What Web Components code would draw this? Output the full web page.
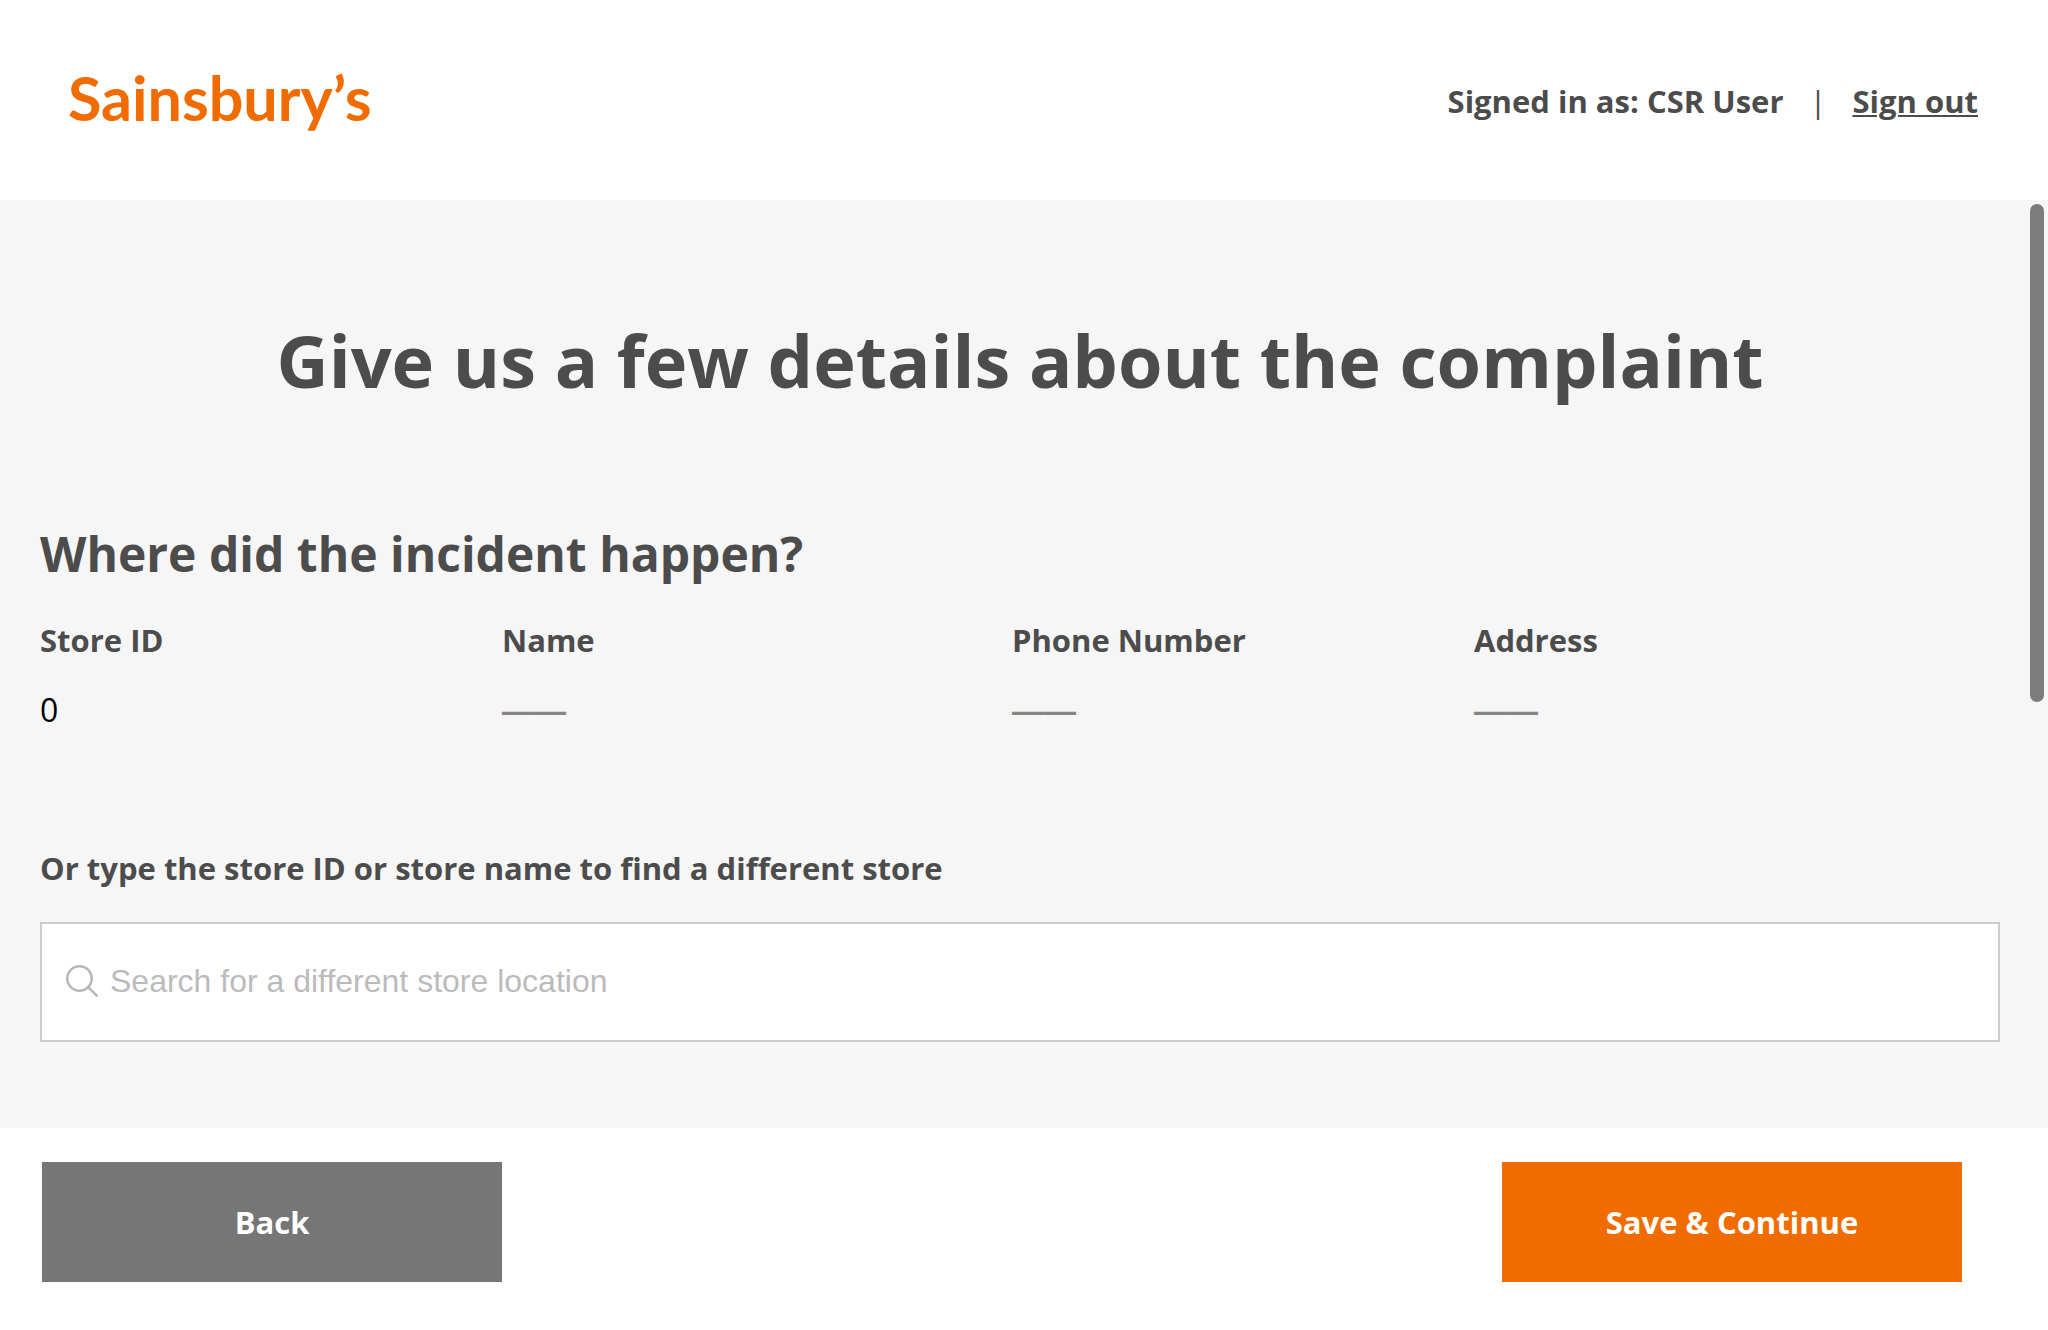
<!DOCTYPE html>
<html lang="en">
<head>
<meta charset="utf-8">
<meta name="viewport" content="width=device-width, initial-scale=1">
<title>Complaint details</title>
<style>
  html, body { height: 100%; }
  body {
    margin: 0;
    color: #4c4c4c;
    background: #fff;
    font: 700 31px/40px "Open Sans", "Noto Sans", sans-serif;
    --brand: #f06c00;
    --gutter: 40px;
  }
</style>
</head>
<body>
<complaint-page>
  <site-header slot="header" user="CSR User"></site-header>
  <store-details heading="Where did the incident happen?">
    <store-field label="Store ID">0</store-field>
    <store-field label="Name"></store-field>
    <store-field label="Phone Number"></store-field>
    <store-field label="Address"></store-field>
  </store-details>
  <store-search label="Or type the store ID or store name to find a different store" placeholder="Search for a different store location"></store-search>
  <action-bar slot="footer">
    <action-button slot="start" variant="secondary">Back</action-button>
    <action-button slot="end">Save &amp; Continue</action-button>
  </action-bar>
</complaint-page>

<script>
  class BaseElement extends HTMLElement {
    connectedCallback() {
      if (this.shadowRoot) return;
      const template = document.createElement('template');
      template.innerHTML = this.render();
      this.attachShadow({ mode: 'open' }).append(template.content.cloneNode(true));
    }
    attr(name) { return this.getAttribute(name) || ''; }
  }

  customElements.define('complaint-page', class extends BaseElement {
    render() {
      return `
        <style>
          :host { display: flex; flex-direction: column; height: 100vh; }
          .body { position: relative; flex: 1; min-height: 0; background: #f6f6f6; }
          main {
            box-sizing: border-box; height: 100%; overflow-y: auto; scrollbar-width: none;
            padding: 120px 48px 80px var(--gutter);
          }
          h1 { margin: 0 0 124px; font-size: 72px; line-height: 80px; text-align: center; }
          .thumb {
            position: absolute; top: 4px; right: 4px; width: 14px; height: 498px;
            border-radius: 7px; background: #7c7c7c;
          }
        </style>
        <slot name="header"></slot>
        <div class="body">
          <main>
            <h1>Give us a few details about the complaint</h1>
            <slot></slot>
          </main>
          <div class="thumb" aria-hidden="true"></div>
        </div>
        <slot name="footer"></slot>`;
    }
  });

  customElements.define('brand-logo', class extends BaseElement {
    render() {
      return `
        <style>
          :host { display: block; }
          a { display: block; }
          svg { display: block; fill: var(--brand); font: 700 61px/1 Lato, sans-serif; }
        </style>
        <a href="#" aria-label="Sainsbury's home">
          <svg width="320" height="80" viewBox="0 0 320 80"><text x="0" y="60">Sainsbury’s</text></svg>
        </a>`;
    }
  });

  customElements.define('site-header', class extends BaseElement {
    render() {
      return `
        <style>
          :host { display: block; }
          header {
            display: flex; align-items: center; justify-content: space-between;
            box-sizing: border-box; height: 200px; padding: 2px 70px 0 68px;
          }
          nav { display: flex; align-items: center; gap: 26px; }
          .rule { font-weight: 400; }
          a { color: inherit; text-decoration-thickness: 2px; text-underline-offset: 2px; }
        </style>
        <header>
          <brand-logo></brand-logo>
          <nav aria-label="Account">
            <span>Signed in as: ${this.attr('user')}</span>
            <span class="rule">|</span>
            <a href="#">Sign out</a>
          </nav>
        </header>`;
    }
  });

  customElements.define('store-details', class extends BaseElement {
    render() {
      return `
        <style>
          :host { display: block; }
          h2 { margin: 0 0 36px; font-size: 48px; line-height: 60px; }
          .fields { display: grid; grid-template-columns: 462fr 510fr 462fr 526fr; }
        </style>
        <section>
          <h2>${this.attr('heading')}</h2>
          <div class="fields"><slot></slot></div>
        </section>`;
    }
  });

  customElements.define('store-field', class extends BaseElement {
    render() {
      return `
        <style>
          :host { display: block; }
          dl, dd { margin: 0; }
          dd { margin-top: 30px; font-size: 32px; font-weight: 400; color: #000; }
          .empty { font-family: "Liberation Sans", sans-serif; font-weight: 700; color: #858585; }
        </style>
        <dl>
          <dt>${this.attr('label')}</dt>
          <dd><slot><span class="empty">——</span></slot></dd>
        </dl>`;
    }
  });

  customElements.define('store-search', class extends BaseElement {
    render() {
      return `
        <style>
          :host { display: block; margin-top: 117px; }
          label { display: block; margin-bottom: 34px; }
          .box {
            display: flex; align-items: center; gap: 12px; box-sizing: border-box;
            height: 120px; padding: 0 24px 2px; border: 2px solid #ccc; background: #fff;
          }
          svg { flex: none; fill: none; stroke: #b4b8b8; stroke-width: 2.5; }
          input {
            flex: 1; min-width: 0; padding: 0; border: 0; outline: 0; background: none; color: #4c4c4c;
            font: 400 32px/40px "Liberation Sans", sans-serif;
          }
          input::placeholder { color: #bbb; opacity: 1; }
        </style>
        <label for="store">${this.attr('label')}</label>
        <div class="box">
          <svg width="32" height="32" viewBox="0 0 32 32" aria-hidden="true">
            <circle cx="13.5" cy="13.5" r="12.2"/><path d="M22.2 22.2 31.5 31.5"/>
          </svg>
          <input id="store" type="text" placeholder="${this.attr('placeholder')}">
        </div>`;
    }
  });

  customElements.define('action-bar', class extends BaseElement {
    render() {
      return `
        <style>
          :host { display: block; background: #fff; }
          footer { display: flex; justify-content: space-between; padding: 34px 86px 48px 42px; }
        </style>
        <footer><slot name="start"></slot><slot name="end"></slot></footer>`;
    }
  });

  customElements.define('action-button', class extends BaseElement {
    render() {
      return `
        <style>
          :host { display: block; }
          button {
            display: block; width: 460px; height: 120px; padding: 0; border: 0; cursor: pointer;
            color: #fff; background: var(--brand); font: inherit;
          }
          :host([variant="secondary"]) button { background: #767676; }
        </style>
        <button type="button"><slot></slot></button>`;
    }
  });
</script>
</body>
</html>
